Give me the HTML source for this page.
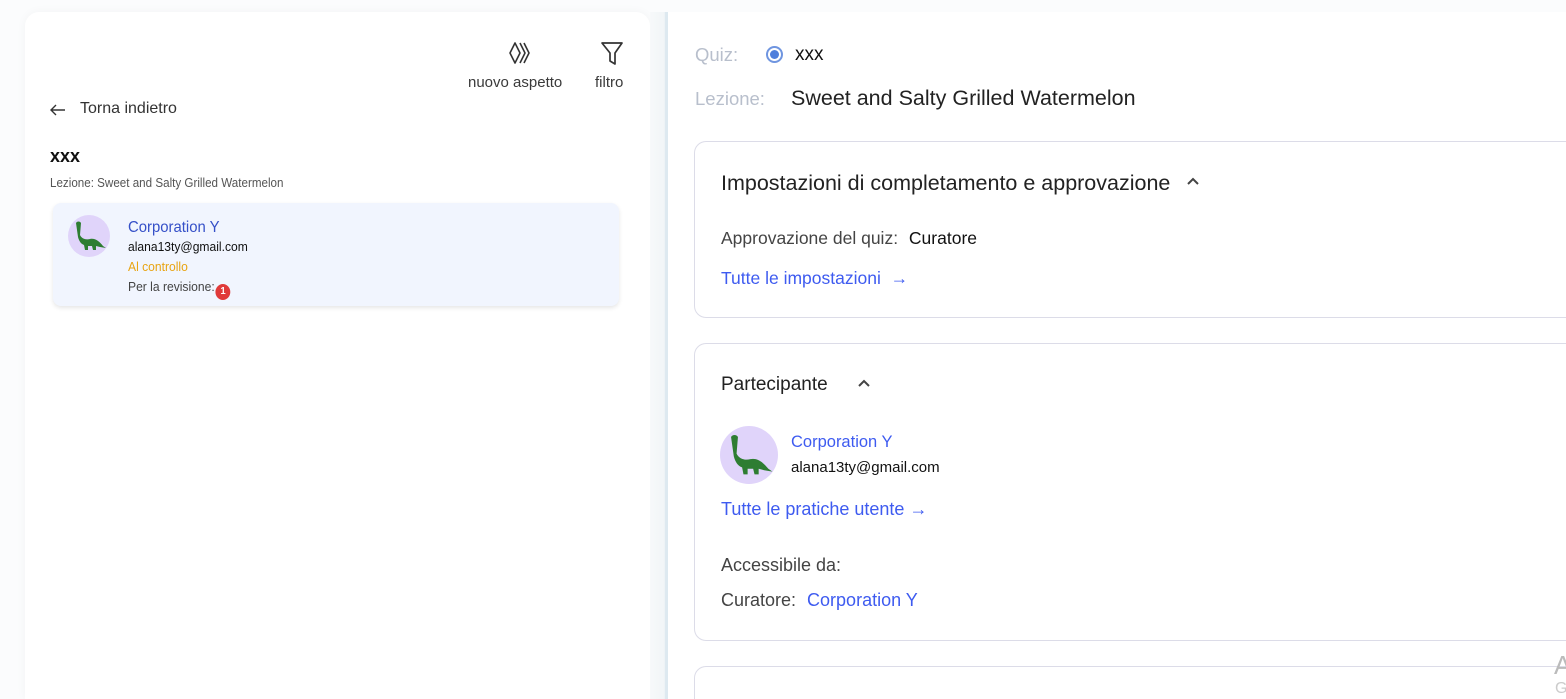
<!DOCTYPE html>
<html><head><meta charset="utf-8">
<style>
*{box-sizing:border-box;margin:0;padding:0}
html,body{width:1566px;height:699px;overflow:hidden}
body{background:#fbfcfd;font-family:"Liberation Sans",sans-serif;position:relative}
.left{position:absolute;left:25px;top:12px;width:625px;height:687px;background:#fff;border-radius:14px 14px 0 0;box-shadow:0 0 10px rgba(0,0,0,.04)}
.div{position:absolute;left:650px;top:12px;width:18px;height:687px;background:linear-gradient(90deg,#f7f9fa,#f1f5f7 80%,#dde9f0 85%,#dde9f0)}
.right{position:absolute;left:668px;top:12px;width:898px;height:687px;background:#fff;overflow:hidden}
.abs{position:absolute;white-space:nowrap}
.tool{position:absolute;font-size:15px;color:#3a3a3a;text-align:center}
.card{position:absolute;left:28px;top:191px;width:566px;height:103px;background:#f1f5fe;border-radius:8px;box-shadow:0 2px 4px rgba(0,0,0,.1)}
.av{position:absolute;border-radius:50%;background:#e0d4fa;overflow:hidden}
.box{position:absolute;left:26px;width:872px;border:1px solid #dcdce8;border-right:none;border-radius:12px 0 0 12px;background:#fff}
.blue{color:#3e5bf0}
.cond{transform:scaleX(.93);transform-origin:left}
</style></head><body>
<div class="left">
  <svg class="abs" style="left:483px;top:29px" width="24" height="24" viewBox="0 0 24 24" fill="none" stroke="#333" stroke-width="1.6" stroke-linejoin="round"><path d="M7 2L2 12l5 10 5-10z"/><path d="M12 2l5 10-5 10M16 2l5 10-5 10"/></svg>
  <div class="tool" style="left:443px;top:62px">nuovo aspetto</div>
  <svg class="abs" style="left:575px;top:29px" width="24" height="26" viewBox="0 0 24 26" fill="none" stroke="#333" stroke-width="1.7" stroke-linejoin="round"><path d="M2 2h20l-7 10v11l-5-3v-8z"/></svg>
  <div class="tool" style="left:570px;top:62px">filtro</div>
  <svg class="abs" style="left:24px;top:91px" width="18" height="14" viewBox="0 0 18 14" fill="none" stroke="#333" stroke-width="1.4"><path d="M16 7H2M7 2L2 7l5 5"/></svg>
  <div class="abs" style="left:55px;top:88px;font-size:16px;color:#333">Torna indietro</div>
  <div class="abs" style="left:25px;top:134px;font-size:18px;font-weight:bold;color:#111">xxx</div>
  <div class="abs cond" style="left:25px;top:164px;font-size:12.5px;color:#555">Lezione: Sweet and Salty Grilled Watermelon</div>
  <div class="card">
    <div class="av" style="left:15px;top:12px;width:42px;height:42px"><svg width="42" height="42" viewBox="0 0 42 42"><path fill="#2e7d32" d="M8 8c1-2 4-2 5 0l-1 12c2 4 6 5 10 4 5-1 9 2 13 7l3 2-6-1-4-1v4h-3l-1-4h-4v4h-3l-1-5c-3-1-5-4-6-8z"/></svg></div>
    <div class="abs cond" style="left:75px;top:16px;font-size:16px;color:#3550c8">Corporation Y</div>
    <div class="abs cond" style="left:75px;top:36px;font-size:13px;color:#111">alana13ty@gmail.com</div>
    <div class="abs cond" style="left:75px;top:56px;font-size:13px;color:#e8a413">Al controllo</div>
    <div class="abs cond" style="left:75px;top:76px;font-size:13px;color:#444">Per la revisione:<span style="display:inline-block;width:16px;height:16px;border-radius:50%;background:#e03a3a;color:#fff;font-size:10px;font-weight:bold;text-align:center;line-height:16px;margin-left:1px;vertical-align:-3px">1</span></div>
  </div>
</div>
<div class="div"></div>
<div class="right">
  <div class="abs" style="left:27px;top:32px;font-size:18.5px;color:#b8bfcc">Quiz:</div>
  <div class="abs" style="left:98px;top:34px;width:17px;height:17px;border-radius:50%;border:2px solid #6f95e0;background:#fff"><div style="margin:2px;width:9px;height:9px;border-radius:50%;background:#4f7fdc"></div></div>
  <div class="abs" style="left:127px;top:32px;font-size:19px;color:#111">xxx</div>
  <div class="abs" style="left:27px;top:76px;font-size:18.5px;color:#b8bfcc">Lezione:</div>
  <div class="abs" style="left:123px;top:74px;font-size:21.5px;color:#222">Sweet and Salty Grilled Watermelon</div>
  <div class="box" style="top:129px;height:177px">
    <div class="abs" style="left:26px;top:29px;font-size:21.5px;color:#222">Impostazioni di completamento e approvazione</div>
    <svg class="abs" style="left:491px;top:34px" width="14" height="10" viewBox="0 0 14 10" fill="none" stroke="#444" stroke-width="2"><path d="M2 8l5-5 5 5"/></svg>
    <div class="abs" style="left:26px;top:86px;font-size:17.5px;color:#444">Approvazione del quiz: <span style="color:#111;margin-left:6px">Curatore</span></div>
    <div class="abs blue" style="left:26px;top:126px;font-size:17.5px">Tutte le impostazioni &nbsp;→</div>
  </div>
  <div class="box" style="top:331px;height:298px">
    <div class="abs" style="left:26px;top:30px;font-size:19px;color:#222">Partecipante</div>
    <svg class="abs" style="left:162px;top:34px" width="14" height="10" viewBox="0 0 14 10" fill="none" stroke="#444" stroke-width="2"><path d="M2 8l5-5 5 5"/></svg>
    <div class="av" style="left:25px;top:82px;width:58px;height:58px"><svg width="58" height="58" viewBox="0 0 42 42"><path fill="#2e7d32" d="M8 8c1-2 4-2 5 0l-1 12c2 4 6 5 10 4 5-1 9 2 13 7l3 2-6-1-4-1v4h-3l-1-4h-4v4h-3l-1-5c-3-1-5-4-6-8z"/></svg></div>
    <div class="abs blue" style="left:96px;top:89px;font-size:16.5px">Corporation Y</div>
    <div class="abs" style="left:96px;top:115px;font-size:15px;color:#111">alana13ty@gmail.com</div>
    <div class="abs blue" style="left:26px;top:155px;font-size:18px">Tutte le pratiche utente →</div>
    <div class="abs" style="left:26px;top:211px;font-size:18px;color:#444">Accessibile da:</div>
    <div class="abs" style="left:26px;top:246px;font-size:18px;color:#444">Curatore: <span class="blue" style="margin-left:6px">Corporation Y</span></div>
  </div>
  <div class="box" style="top:654px;height:33px;border-bottom:none;border-radius:12px 0 0 0"></div>
  <div class="abs" style="left:886px;top:638px;font-size:26px;color:#bbb">A</div>
  <div class="abs" style="left:887px;top:668px;font-size:16px;color:#ccc">G</div>
</div>
</body></html>
